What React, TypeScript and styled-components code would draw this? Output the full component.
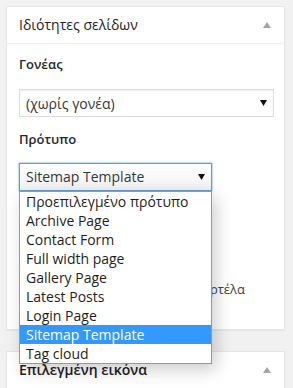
import React from 'react';
import styled, { createGlobalStyle } from 'styled-components';

const GlobalStyle = createGlobalStyle`
    html, body {
        margin: 0;
        padding: 0;
        background: #f1f1f1;
    }
    body {
        font-family: "Open Sans", "Noto Sans", sans-serif;
        color: #444;
    }
    #root {
        height: 388px;
        overflow: hidden;
    }
`

const Page = styled.div`
    display: flex;
    flex-direction: column;
    gap: 21px;
    padding: 6px 8px 0 6px;
`
const Postbox = styled.div`
    background: #fff;
    border: 1px solid #e5e5e5;
    box-shadow: 0 1px 1px rgba(0, 0, 0, 0.04);
`
const Header = styled.div`
    display: flex;
    align-items: center;
    justify-content: space-between;
    padding: 8px 12px;
    border-bottom: 1px solid #eee;
`
const Title = styled.h2<{ $bold?: boolean }>`
    margin: 0;
    font-size: 14px;
    line-height: 1.4;
    font-weight: ${p => (p.$bold ? 600 : 400)};
    color: #1d2125;
`
const Toggle = styled.svg`
    width: 8px;
    height: 6px;
    margin-right: 1px;
    fill: #a0a5aa;
`
const Inside = styled.div`
    padding: 0 11px 10px 12px;
`
const Label = styled.p<{ $first?: boolean }>`
    margin: ${p => (p.$first ? '11px 0 15px' : '13px 0 13px')};
    font-size: 13px;
    line-height: 1.5;
    font-weight: 600;
    color: #23282d;
`
const SelectWrap = styled.div<{ $width: number }>`
    position: relative;
    width: ${p => p.$width}px;
`
const Select = styled.div<{ $open?: boolean }>`
    box-sizing: border-box;
    height: 28px;
    display: flex;
    align-items: center;
    justify-content: space-between;
    padding: 0 6px 0 6px;
    border: 1px solid ${p => (p.$open ? '#5b9dd9' : '#ddd')};
    background: ${p => (p.$open ? 'linear-gradient(#fff, #f1f1f1)' : '#fff')};
    box-shadow: ${p => (p.$open ? '0 0 2px rgba(30, 140, 190, 0.8)' : 'inset 0 1px 2px rgba(0, 0, 0, 0.07)')};
    font-size: 14px;
    color: #32373c;
`
const Arrow = styled.svg`
    width: 7px;
    height: 6px;
    fill: #111;
`
const OptionList = styled.ul`
    position: absolute;
    top: 100%;
    left: 0;
    right: 0;
    z-index: 10;
    margin: 0;
    padding: 0;
    list-style: none;
    background: #fff;
    border: 1px solid #7f9ccb;
    box-shadow: 4px 6px 16px rgba(0, 0, 0, 0.2);
`
const Option = styled.li<{ $active?: boolean }>`
    height: 19px;
    line-height: 19px;
    padding: 0 6px;
    font-size: 14px;
    white-space: nowrap;
    color: ${p => (p.$active ? '#fff' : '#1e1e1e')};
    background: ${p => (p.$active ? '#3399ff' : 'transparent')};
`
const OrderInput = styled.div`
    box-sizing: border-box;
    width: 52px;
    height: 28px;
    border: 1px solid #ddd;
    box-shadow: inset 0 1px 2px rgba(0, 0, 0, 0.07);
`
const Help = styled.p`
    margin: 16px 0 0;
    font-size: 13px;
    line-height: 1.5;
    color: #444;
    & span {
        display: block;
        white-space: nowrap;
    }
`

const templates = [
    'Προεπιλεγμένο πρότυπο',
    'Archive Page',
    'Contact Form',
    'Full width page',
    'Gallery Page',
    'Latest Posts',
    'Login Page',
    'Sitemap Template',
    'Tag cloud',
]

const ToggleIcon = () => (
    <Toggle viewBox="0 0 8 6">
        <polygon points="4,0 8,6 0,6" />
    </Toggle>
)

const DownArrow = () => (
    <Arrow viewBox="0 0 7 6">
        <polygon points="0,0 7,0 3.5,6" />
    </Arrow>
)

export default function App() {
    const selected = 'Sitemap Template'
    return (
        <>
            <GlobalStyle />
            <Page>
                <Postbox>
                    <Header>
                        <Title>Ιδιότητες σελίδων</Title>
                        <ToggleIcon />
                    </Header>
                    <Inside>
                        <Label $first>Γονέας</Label>
                        <SelectWrap $width={255}>
                            <Select>
                                <span>(χωρίς γονέα)</span>
                                <DownArrow />
                            </Select>
                        </SelectWrap>
                        <Label>Πρότυπο</Label>
                        <SelectWrap $width={193}>
                            <Select $open>
                                <span>{selected}</span>
                                <DownArrow />
                            </Select>
                            <OptionList>
                                {templates.map(t => (
                                    <Option key={t} $active={t === selected}>{t}</Option>
                                ))}
                            </OptionList>
                        </SelectWrap>
                        <Label>Σειρά</Label>
                        <OrderInput />
                        <Help>
                            <span>Θέλετε βοήθεια; Ανοίξτε την καρτέλα</span>
                            <span>Βοήθεια πάνω από τον τίτλο.</span>
                        </Help>
                    </Inside>
                </Postbox>
                <Postbox>
                    <Header>
                        <Title $bold>Επιλεγμένη εικόνα</Title>
                        <ToggleIcon />
                    </Header>
                </Postbox>
            </Page>
        </>
    )
}
